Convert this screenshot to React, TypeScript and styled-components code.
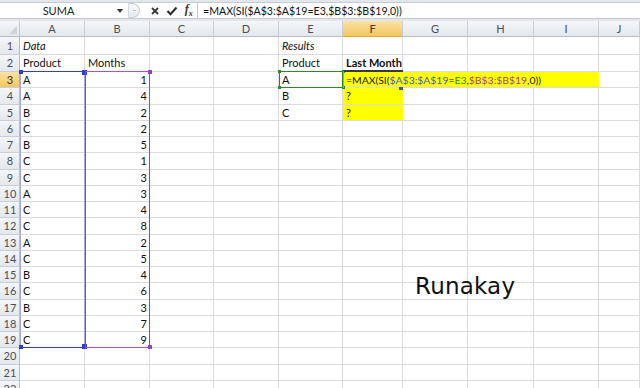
import React from "react";
import styled, { createGlobalStyle, css } from "styled-components";

const GlobalStyle = createGlobalStyle`
  html, body {
    margin: 0;
    padding: 0;
    background: #fff;
    overflow: hidden;
  }
  body {
    font-family: Lato, "Open Sans", "Liberation Sans", sans-serif;
  }
`;

const COLS = [
  { label: "A", w: 65 },
  { label: "B", w: 65 },
  { label: "C", w: 64 },
  { label: "D", w: 65 },
  { label: "E", w: 64 },
  { label: "F", w: 60 },
  { label: "G", w: 65 },
  { label: "H", w: 66 },
  { label: "I", w: 65 },
  { label: "J", w: 41 },
];
const TOTAL_ROWS = 22;

const TEMPLATE_COLS = `20px ${COLS.map((c) => `${c.w}px`).join(" ")}`;
const TEMPLATE_ROWS = `16px 17.5px 17.5px repeat(${TOTAL_ROWS - 2}, 16.25px)`;

const data: [string, number][] = [
  ["A", 1], ["A", 4], ["B", 2], ["C", 2], ["B", 5], ["C", 1], ["C", 3],
  ["A", 3], ["C", 4], ["C", 8], ["A", 2], ["C", 5], ["B", 4], ["C", 6],
  ["B", 3], ["C", 7], ["C", 9],
];

interface CellData {
  v: string;
  num?: boolean;
  italic?: boolean;
  bold?: boolean;
  yellow?: boolean;
}

const cells: Record<string, CellData> = {
  A1: { v: "Data", italic: true },
  E1: { v: "Results", italic: true },
  A2: { v: "Product" },
  B2: { v: "Months" },
  E2: { v: "Product" },
  F2: { v: "Last Month", bold: true },
  E3: { v: "A" },
  E4: { v: "B" },
  E5: { v: "C" },
  F4: { v: "?", yellow: true },
  F5: { v: "?", yellow: true },
};
data.forEach(([p, m], i) => {
  cells[`A${i + 3}`] = { v: p };
  cells[`B${i + 3}`] = { v: String(m), num: true };
});

/* ---------- window & formula bar ---------- */

const Window = styled.div`
  position: relative;
  width: 640px;
  height: 388px;
  overflow: hidden;
  background: #fff;
  display: flex;
  flex-direction: column;
`;

const BarStrip = styled.div`
  height: 21px;
  flex-shrink: 0;
  background: #e3e7ec;
  padding: 2px 0;
  box-sizing: border-box;
  display: flex;
`;

const FormulaBar = styled.div`
  flex: 1;
  min-width: 0;
  display: flex;
  align-items: center;
  background: #fff;
  border-top: 1px solid #c6ccd4;
  border-bottom: 1px solid #c6ccd4;
`;

const NameBox = styled.div`
  width: 128px;
  flex-shrink: 0;
  height: 100%;
  display: flex;
  align-items: center;
  box-sizing: border-box;
  font-size: 11px;
  color: #222;
`;

const NameText = styled.span`
  flex: 1;
  text-align: center;
  padding-left: 16px;
`;

const DropArrow = styled.span`
  width: 0;
  height: 0;
  border-left: 3px solid transparent;
  border-right: 3px solid transparent;
  border-top: 4px solid #333;
  margin: 0 5px 0 16px;
`;

const ButtonArea = styled.div`
  width: 70px;
  flex-shrink: 0;
  height: 100%;
  display: flex;
  align-items: center;
  box-sizing: border-box;
  border-right: 1px solid #c6ccd4;
`;

const Grip = styled.div`
  width: 12px;
  height: 15px;
  margin-right: 7px;
  border-radius: 0 8px 8px 0;
  border: 1px solid #c8ced6;
  border-left: 1px solid #d6dbe1;
  background: linear-gradient(#f8f9fb, #e6eaef);
  box-sizing: border-box;
  position: relative;
  &::after {
    content: "";
    position: absolute;
    left: 4px;
    top: 6px;
    width: 3px;
    height: 1px;
    background: #b9c0c8;
  }
`;

const IconBtn = styled.span`
  width: 17px;
  display: flex;
  justify-content: center;
  align-items: center;
`;

const FxText = styled.span`
  font-family: "Liberation Serif", serif;
  font-style: italic;
  font-weight: bold;
  font-size: 12px;
  color: #333;
  sub {
    font-size: 8px;
  }
`;

const FormulaInput = styled.div`
  flex: 1;
  min-width: 0;
  padding-left: 5px;
  font-size: 10.6px;
  color: #111;
  white-space: nowrap;
  overflow: hidden;
`;

/* ---------- sheet grid ---------- */

const SheetWrap = styled.div`
  position: relative;
  flex: 1;
`;

const Sheet = styled.div`
  display: grid;
  grid-template-columns: ${TEMPLATE_COLS};
  grid-template-rows: ${TEMPLATE_ROWS};
  font-size: 11px;
`;

const headerBg = css<{ $active?: boolean }>`
  background: ${(p) =>
    p.$active
      ? "linear-gradient(#fbe3a3, #f3c65f)"
      : "linear-gradient(#f4f6f8, #e4e8ec)"};
  color: ${(p) => (p.$active ? "#3d3520" : "#4a4f57")};
`;

const Corner = styled.div`
  background: linear-gradient(#f4f6f8, #e4e8ec);
  border-right: 1px solid #c2c8cf;
  border-bottom: 1px solid #b6bdc6;
  box-sizing: border-box;
  display: flex;
  justify-content: flex-end;
  align-items: flex-end;
  padding: 2px;
  &::after {
    content: "";
    border-left: 8px solid transparent;
    border-bottom: 8px solid #cfd4da;
  }
`;

const ColHead = styled.div<{ $active?: boolean }>`
  ${headerBg};
  border-right: 1px solid #c9cfd6;
  border-bottom: 1px solid ${(p) => (p.$active ? "#e2a93a" : "#b6bdc6")};
  box-sizing: border-box;
  display: flex;
  align-items: center;
  justify-content: center;
`;

const RowHead = styled.div<{ $active?: boolean }>`
  ${headerBg};
  border-right: 1px solid ${(p) => (p.$active ? "#e2a93a" : "#b6bdc6")};
  border-bottom: 1px solid #c9cfd6;
  box-sizing: border-box;
  display: flex;
  align-items: center;
  justify-content: center;
  padding-left: 1px;
`;

const Cell = styled.div<{
  $num?: boolean;
  $italic?: boolean;
  $bold?: boolean;
  $yellow?: boolean;
  $span?: number;
}>`
  grid-column: span ${(p) => p.$span ?? 1};
  box-sizing: border-box;
  border-right: 1px solid ${(p) => (p.$yellow ? "transparent" : "#dadcdd")};
  border-bottom: 1px solid #dadcdd;
  background: ${(p) => (p.$yellow ? "#ffff00" : "#fff")};
  display: flex;
  align-items: center;
  justify-content: ${(p) => (p.$num ? "flex-end" : "flex-start")};
  padding: 0 2px 0 3px;
  font-style: ${(p) => (p.$italic ? "italic" : "normal")};
  font-weight: ${(p) => (p.$bold ? 700 : 400)};
  color: #111;
  white-space: nowrap;
`;

const EditText = styled.span`
  font-size: 10.4px;
`;

const Ref = styled.span<{ $c: string }>`
  color: ${(p) => p.$c};
`;

/* ---------- overlay: reference ranges drawn over the sheet ---------- */

const OverlayGrid = styled.div`
  position: absolute;
  inset: 0;
  display: grid;
  grid-template-columns: ${TEMPLATE_COLS};
  grid-template-rows: ${TEMPLATE_ROWS};
  pointer-events: none;
`;

const Range = styled.div<{
  $area: string;
  $side: string;
  $edge: string;
}>`
  grid-area: ${(p) => p.$area};
  position: relative;
  box-sizing: border-box;
  margin-top: -1px;
  border-left: 1px solid ${(p) => p.$side};
  border-right: 1px solid ${(p) => p.$side};
  border-top: 1px solid ${(p) => p.$edge};
  border-bottom: 1px solid ${(p) => p.$edge};
`;

const handlePos = {
  tl: "left: -2px; top: -2px;",
  tr: "right: -3px; top: -2px;",
  bl: "left: -2px; bottom: -2px;",
  br: "right: -3px; bottom: -2px;",
};

const Handle = styled.span<{ $color: string; $at: keyof typeof handlePos; $size?: number }>`
  position: absolute;
  ${(p) => handlePos[p.$at]};
  width: ${(p) => p.$size ?? 4}px;
  height: ${(p) => p.$size ?? 4}px;
  background: ${(p) => p.$color};
`;

const EditFrame = styled.div`
  grid-area: 4 / 7 / 5 / 8;
  position: relative;
  margin-top: -2px;
  border-top: 2px solid #3a3a3a;
  border-left: 1px solid #e07ad0;
`;

const FillHandle = styled.span`
  position: absolute;
  right: 0;
  bottom: -2px;
  width: 4px;
  height: 3px;
  background: #3355bb;
`;

const Watermark = styled.div`
  position: absolute;
  left: 415px;
  top: 273px;
  font-family: "DejaVu Sans", sans-serif;
  font-size: 23px;
  color: #111;
  letter-spacing: 0.2px;
`;

const FORMULA = "=MAX(SI($A$3:$A$19=E3,$B$3:$B$19,0))";

export default function App() {
  const rows: React.ReactNode[] = [];
  for (let r = 1; r <= TOTAL_ROWS; r++) {
    rows.push(
      <RowHead key={`rh${r}`} $active={r === 3}>
        {r}
      </RowHead>
    );
    for (let c = 0; c < COLS.length; c++) {
      const key = `${COLS[c].label}${r}`;
      if (key === "F3") {
        // cell in edit mode: the formula spills over F3:I3
        rows.push(
          <Cell key={key} $yellow $span={4}>
            <EditText>
              =MAX(SI(<Ref $c="#3b5bd6">$A$3:$A$19</Ref>=<Ref $c="#2e8b2e">E3</Ref>,
              <Ref $c="#a8409a">$B$3:$B$19</Ref>,0))
            </EditText>
          </Cell>
        );
        c += 3;
        continue;
      }
      const d = cells[key];
      rows.push(
        <Cell key={key} $num={d?.num} $italic={d?.italic} $bold={d?.bold} $yellow={d?.yellow}>
          {d?.v}
        </Cell>
      );
    }
  }

  return (
    <>
      <GlobalStyle />
      <Window>
        <BarStrip>
          <FormulaBar>
            <NameBox>
              <NameText>SUMA</NameText>
              <DropArrow />
            </NameBox>
            <ButtonArea>
              <Grip />
              <IconBtn>
                <svg width="10" height="10" viewBox="0 0 10 10">
                  <path d="M2 2 L8 8 M8 2 L2 8" stroke="#3a3a3a" strokeWidth="1.9" />
                </svg>
              </IconBtn>
              <IconBtn>
                <svg width="12" height="10" viewBox="0 0 12 10">
                  <path d="M1.5 5 L4.5 8.2 L10.5 1.5" stroke="#2f2f2f" strokeWidth="2.1" fill="none" />
                </svg>
              </IconBtn>
              <IconBtn>
                <FxText>
                  f<sub>x</sub>
                </FxText>
              </IconBtn>
            </ButtonArea>
            <FormulaInput>{FORMULA}</FormulaInput>
          </FormulaBar>
        </BarStrip>
        <SheetWrap>
          <Sheet>
            <Corner />
            {COLS.map((c) => (
              <ColHead key={c.label} $active={c.label === "F"}>
                {c.label}
              </ColHead>
            ))}
            {rows}
          </Sheet>

          <OverlayGrid>
            <Range $area="4 / 2 / 21 / 3" $side="#a7a9e0" $edge="#2f3fd6">
              <Handle $color="#2f3fd6" $at="tl" />
              <Handle $color="#2f3fd6" $at="tr" $size={5} />
              <Handle $color="#2f3fd6" $at="bl" />
              <Handle $color="#2f3fd6" $at="br" $size={5} />
            </Range>
            <Range $area="4 / 3 / 21 / 4" $side="#9b3fbf" $edge="#b04fc8">
              <Handle $color="#9b3fbf" $at="tr" />
              <Handle $color="#9b3fbf" $at="br" />
            </Range>
            <Range $area="4 / 6 / 5 / 7" $side="#2a8a2a" $edge="#2a8a2a">
              <Handle $color="#2a8a2a" $at="tl" $size={3} />
              <Handle $color="#2a8a2a" $at="tr" $size={3} />
              <Handle $color="#2a8a2a" $at="bl" $size={3} />
              <Handle $color="#2a8a2a" $at="br" $size={3} />
            </Range>
            <EditFrame>
              <FillHandle />
            </EditFrame>
          </OverlayGrid>
        </SheetWrap>
        <Watermark>Runakay</Watermark>
      </Window>
    </>
  );
}
